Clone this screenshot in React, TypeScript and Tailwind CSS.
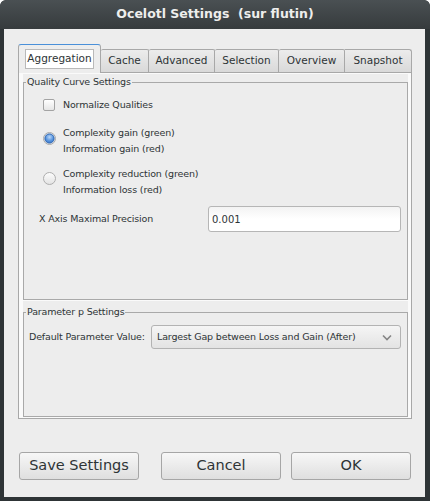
import React from "react";

function RadioOn() {
  return (
    <svg width="13" height="13" viewBox="0 0 13 13">
      <defs>
        <radialGradient id="rgOn" cx="50%" cy="35%" r="70%">
          <stop offset="0" stopColor="#bcd8f8" />
          <stop offset="0.55" stopColor="#5d98e0" />
          <stop offset="1" stopColor="#2f6fc4" />
        </radialGradient>
      </defs>
      <circle cx="6.5" cy="6.5" r="6" fill="#f3f3f3" stroke="#a9a9a9" />
      <circle cx="6.5" cy="6.5" r="4.6" fill="url(#rgOn)" stroke="#2d64ad" strokeWidth="1" />
    </svg>
  );
}

function RadioOff() {
  return (
    <svg width="13" height="13" viewBox="0 0 13 13">
      <defs>
        <linearGradient id="rgOff" x1="0" y1="0" x2="0" y2="1">
          <stop offset="0" stopColor="#fdfdfd" />
          <stop offset="1" stopColor="#e2e2e2" />
        </linearGradient>
      </defs>
      <circle cx="6.5" cy="6.5" r="6" fill="url(#rgOff)" stroke="#adadad" />
    </svg>
  );
}

function Tab({ label, w, last }: { label: string; w: string; last?: boolean }) {
  return (
    <div
      className={`${w} h-[23px] flex items-center justify-center border-t border-r border-[#a8a8a8] ${
        last ? "rounded-tr-[3px]" : "rounded-t-[2px]"
      } bg-gradient-to-b from-[#ececec] to-[#d9d9d9] text-[10.5px]`}
    >
      {label}
    </div>
  );
}

export default function App() {
  return (
    <div className="w-[430px] h-[501px] bg-[#2e3436] rounded-t-[6px] flex flex-col overflow-hidden font-['DejaVu_Sans',sans-serif] text-[#2e3436]">
      <div className="h-[29px] shrink-0 flex items-center justify-center rounded-t-[6px] bg-gradient-to-b from-[#4a5053] to-[#363b3d] text-[#eeeeec] font-bold text-[12.5px] whitespace-pre">
        Ocelotl Settings  (sur flutin)
      </div>
      <div className="ml-[4px] mr-[5px] mb-[4px] flex-1 bg-[#ededed] flex flex-col">
        {/* tabs */}
        <div className="mt-[15px] ml-[14px] w-[394px] h-[28px] flex items-end">
          <div className="relative z-10 w-[83px] h-[29px] -mb-[1px] border-l border-r border-t border-[#a8a8a8] border-t-[#4a90d9] rounded-t-[3px] bg-[#ededed] pt-[4px] pl-[6px]">
            <div className="w-[69px] h-[20px] bg-white border border-[#b9b9b9] flex items-center justify-center text-[10.5px]">
              Aggregation
            </div>
          </div>
          <Tab label="Cache" w="w-[48px]" />
          <Tab label="Advanced" w="w-[66px]" />
          <Tab label="Selection" w="w-[64px]" />
          <Tab label="Overview" w="w-[66px]" />
          <Tab label="Snapshot" w="w-[67px]" last />
        </div>

        {/* page */}
        <div className="ml-[14px] w-[394px] h-[347px] border border-[#a8a8a8] bg-[#fafafa] flex flex-col pt-[1px] pl-[4px] pr-[3px] pb-[1px] gap-[1px] text-[9.5px] tracking-[-0.15px]">
          <div className="h-[226px] bg-[#ededed] flex">
            <fieldset className="flex-1 border border-[#a9a9a9] min-w-0">
              <legend className="ml-[2px] px-[1px] leading-[16px]">Quality Curve Settings</legend>
              <div className="flex flex-col pl-[15px]">
                <div className="mt-[9px] ml-[4px] h-[12px] flex items-center">
                  <div className="w-[12px] h-[12px] rounded-[2px] border border-[#a3a3a3] bg-gradient-to-b from-white to-[#e6e6e6]" />
                  <span className="ml-[8px] leading-[16px]">Normalize Qualities</span>
                </div>
                <div className="mt-[14px] ml-[4px] flex items-start">
                  <div className="mt-[7px] flex">
                    <RadioOn />
                  </div>
                  <div className="ml-[7px] leading-[16px] flex flex-col">
                    <span>Complexity gain (green)</span>
                    <span>Information gain (red)</span>
                  </div>
                </div>
                <div className="mt-[9px] ml-[4px] flex items-start">
                  <div className="mt-[6px] flex">
                    <RadioOff />
                  </div>
                  <div className="ml-[7px] leading-[16px] flex flex-col">
                    <span>Complexity reduction (green)</span>
                    <span>Information loss (red)</span>
                  </div>
                </div>
                <div className="mt-[8px] flex items-center">
                  <span>X Axis Maximal Precision</span>
                  <div className="ml-auto mr-[6px] w-[193px] h-[26px] rounded-[3px] border border-[#b6b6b6] bg-gradient-to-b from-[#f3f3f3] via-white to-white flex items-center pl-[3px] text-[10px] tracking-normal">
                    0.001
                  </div>
                </div>
              </div>
            </fieldset>
          </div>
          <div className="h-[116px] bg-[#ededed] pt-[3px] flex">
            <fieldset className="flex-1 border border-[#a9a9a9] min-w-0">
              <legend className="ml-[2px] px-[1px] leading-[16px]">Parameter p Settings</legend>
              <div className="mt-[5px] pl-[5px] flex items-center">
                <span>Default Parameter Value:</span>
                <div className="ml-auto mr-[6px] w-[250px] h-[24px] rounded-[3px] border border-[#b3b3b3] bg-gradient-to-b from-[#f5f5f5] to-[#e3e3e3] flex items-center pl-[5px] pr-[8px]">
                  <span className="flex-1">Largest Gap between Loss and Gain (After)</span>
                  <svg width="10" height="7" viewBox="0 0 10 7">
                    <path d="M1 1.5 L5 5.5 L9 1.5" fill="none" stroke="#858585" strokeWidth="1.6" />
                  </svg>
                </div>
              </div>
            </fieldset>
          </div>
        </div>

        {/* buttons */}
        <div className="mt-[33px] pl-[15px] flex text-[14.5px]">
          <button className="w-[120px] h-[28px] rounded-[3px] border border-[#a6a6a6] bg-gradient-to-b from-[#f7f7f7] to-[#dfdfdf] flex items-center justify-center">
            Save Settings
          </button>
          <button className="ml-[22px] w-[120px] h-[28px] rounded-[3px] border border-[#a6a6a6] bg-gradient-to-b from-[#f7f7f7] to-[#dfdfdf] flex items-center justify-center">
            Cancel
          </button>
          <button className="ml-[10px] w-[120px] h-[28px] rounded-[3px] border border-[#a6a6a6] bg-gradient-to-b from-[#f7f7f7] to-[#dfdfdf] flex items-center justify-center">
            OK
          </button>
        </div>
      </div>
    </div>
  );
}
